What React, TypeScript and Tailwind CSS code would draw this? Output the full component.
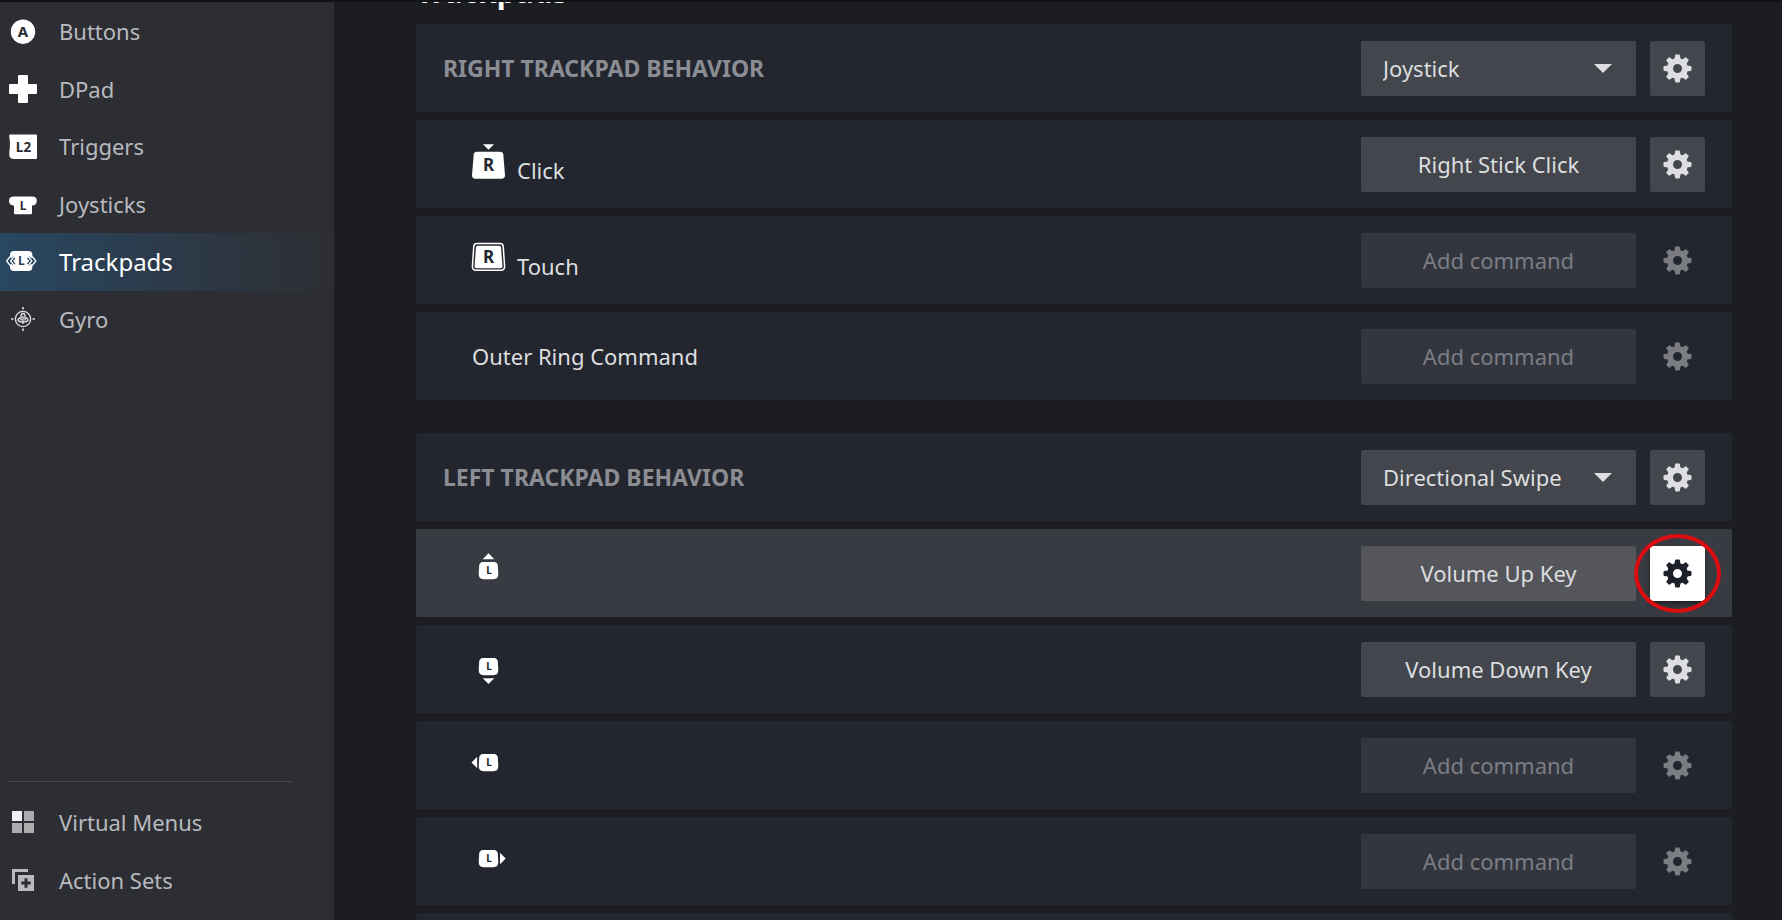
import { useState, type ReactNode } from "react";
import clsx from "clsx";

type Direction = "up" | "down" | "left" | "right";

interface Command {
    id: string;
    label?: string;
    name: string;
    icon?: ReactNode;
    command?: string;
    focused?: boolean;
}

interface BehaviorSectionProps {
    title: string;
    options: string[];
    commands: Command[];
    children?: ReactNode;
}

/* Sidebar icons */

function ButtonsIcon() {
    return (
        <svg viewBox="0 0 30 30" className="size-[30px]" aria-hidden="true">
            <circle cx="15" cy="14.7" r="12.2" fill="#fff" />
            <text x="15" y="20" textAnchor="middle" fontSize="15" fontWeight="700" fill="#2d2e33">
                A
            </text>
        </svg>
    );
}

function DPadIcon() {
    return (
        <svg viewBox="0 0 30 30" className="size-[30px]" aria-hidden="true">
            <rect x="10" y="1" width="10" height="28" rx="1" fill="#fff" />
            <rect x="1" y="10" width="28" height="10" rx="1" fill="#fff" />
        </svg>
    );
}

function TriggersIcon() {
    return (
        <svg viewBox="0 0 30 30" className="size-[30px]" aria-hidden="true">
            <path
                d="M2 2.5H28Q29 2.5 29 3.5V26Q29 27 28 27H6Q1.5 27 1.3 23Q1.2 20 1.8 16Q2.4 10 1.2 4Q1 2.5 2 2.5Z"
                fill="#fff"
            />
            <text x="15.5" y="20" textAnchor="middle" fontSize="13.5" fontWeight="700" fill="#2d2e33">
                L2
            </text>
        </svg>
    );
}

function JoysticksIcon() {
    return (
        <svg viewBox="0 0 30 30" className="size-[30px]" aria-hidden="true">
            <path
                d="M6 7.5H24Q28.8 7.5 28.8 11.5Q28.8 16.5 24 16.5V24.3Q24 25.3 23 25.3H7Q6 25.3 6 24.3V16.5Q1 16.5 1 11.5Q1 7.5 6 7.5Z"
                fill="#fff"
            />
            <text x="15" y="21.3" textAnchor="middle" fontSize="12" fontWeight="700" fill="#2d2e33">
                L
            </text>
        </svg>
    );
}

function TrackpadsIcon() {
    return (
        <svg viewBox="0 0 30 30" className="size-[30px] overflow-visible" aria-hidden="true">
            <rect x="2" y="4" width="22.4" height="20" rx="4" fill="#fff" />
            <g fill="none" stroke="#27435b" strokeWidth="3.2">
                <path d="M2.2 10.2L-1 14L2.2 17.8M6.2 10.2L3 14L6.2 17.8" />
                <path d="M24.2 10.2L27.4 14L24.2 17.8M20.2 10.2L23.4 14L20.2 17.8" />
            </g>
            <g fill="none" stroke="#fff" strokeWidth="1.3">
                <path d="M2.2 9.5L-1.4 14L2.2 18.5M6.2 9.5L2.6 14L6.2 18.5" />
                <path d="M24.2 9.5L27.8 14L24.2 18.5M20.2 9.5L23.8 14L20.2 18.5" />
            </g>
            <text x="13.4" y="18.4" textAnchor="middle" fontSize="12" fontWeight="700" fill="#27435b">
                L
            </text>
        </svg>
    );
}

function GyroIcon() {
    return (
        <svg viewBox="0 0 30 30" className="size-[30px]" aria-hidden="true">
            <g fill="none" stroke="#dcdedf" strokeWidth="1.4">
                <circle cx="15" cy="15" r="7.6" />
                <path d="M15 3V5.5M15 24.5V27M3 15H5.5M24.5 15H27" strokeWidth="1.6" />
                <path d="M13 16.5V12Q13 9.5 15 9.5Q17 9.5 17 12V16.5M15 12V20" />
                <path d="M12.5 13.5Q10 14.5 10 16Q10.5 18 15 18Q19.5 18 20 16Q20 14.5 17.5 13.5" />
            </g>
        </svg>
    );
}

function VirtualMenusIcon() {
    return (
        <svg viewBox="0 0 30 30" className="size-[30px]" aria-hidden="true">
            <rect x="4" y="4" width="10" height="10" fill="#f0f0f1" />
            <rect x="16" y="4" width="10" height="10" fill="#acacae" />
            <rect x="4" y="16" width="10" height="10" fill="#acacae" />
            <rect x="16" y="16" width="10" height="10" fill="#acacae" />
        </svg>
    );
}

function ActionSetsIcon() {
    return (
        <svg viewBox="0 0 30 30" className="size-[30px]" aria-hidden="true">
            <path d="M4 4H20V7H7V19H4Z" fill="#b8babf" />
            <rect x="10" y="10" width="16" height="16" fill="#b8babf" />
            <path d="M18 13.3V22.7M13.3 18H22.7" stroke="#2d2e33" strokeWidth="3" />
        </svg>
    );
}

/* Row icons */

function ClickIcon() {
    return (
        <svg viewBox="0 0 33 36" className="h-9 w-[33px]" aria-hidden="true">
            <path d="M11 1.3H22L16.5 6.7Z" fill="#fff" />
            <path
                d="M5 8.7H28Q31 8.7 31.3 11.5L33 32Q33 35.8 29.5 35.8H3.5Q0 35.8 0 32L1.7 11.5Q2 8.7 5 8.7Z"
                fill="#fff"
            />
            <text x="16.5" y="28" textAnchor="middle" fontSize="17" fontWeight="700" fill="#23262f">
                R
            </text>
        </svg>
    );
}

function TouchIcon() {
    return (
        <svg viewBox="0 0 33 36" className="h-9 w-[33px] overflow-visible" aria-hidden="true">
            <path
                d="M5 4.4H28Q30.8 4.4 31.2 7.2L32.6 27.5Q32.6 31.2 29 31.2H4Q0.4 31.2 0.4 27.5L1.8 7.2Q2.2 4.4 5 4.4Z"
                fill="none"
                stroke="#fff"
                strokeWidth="1.5"
            />
            <path
                d="M5.6 6.7H27.4Q28.9 6.7 29 8.2L30.5 27.5Q30.5 29.2 29 29.2H4Q2.5 29.2 2.5 27.5L4 8.2Q4.1 6.7 5.6 6.7Z"
                fill="#fff"
            />
            <text x="16.5" y="24" textAnchor="middle" fontSize="17" fontWeight="700" fill="#23262f">
                R
            </text>
        </svg>
    );
}

const arrows: Record<Direction, string> = {
    up: "M10.7 7.2L16.5 1.2L22.3 7.2Z",
    down: "M10.7 30.2L16.5 36L22.3 30.2Z",
    left: "M5.2 12.7L-0.5 18.5L5.2 24.3Z",
    right: "M28 12.7L33.7 18.5L28 24.3Z",
};

function SwipeIcon({ direction }: { direction: Direction }) {
    return (
        <svg viewBox="0 0 33 36" className="h-9 w-[33px] overflow-visible" aria-hidden="true">
            <path d={arrows[direction]} fill="#fff" />
            <path
                d="M11 10H22Q25.3 10 25.8 13.5L26.3 22Q26.3 27.2 21.5 27.2H11.5Q6.7 27.2 6.7 22L7.2 13.5Q7.7 10 11 10Z"
                fill="#fff"
            />
            <text x="17" y="22" textAnchor="middle" fontSize="10" fontWeight="700" fill="#23262f">
                L
            </text>
        </svg>
    );
}

function GearIcon() {
    return (
        <svg viewBox="-0.5 -0.5 29 29" className="size-[29px]" aria-hidden="true">
            <circle cx="14" cy="14" r="7.5" fill="none" stroke="currentColor" strokeWidth="6" />
            {[0, 45, 90, 135, 180, 225, 270, 315].map((angle) => (
                <path
                    key={angle}
                    d="M10.9 5L11.6 0.8Q11.7 0 12.4 0H15.6Q16.3 0 16.4 0.8L17.1 5Z"
                    transform={`rotate(${angle} 14 14)`}
                    fill="currentColor"
                />
            ))}
        </svg>
    );
}

const inputs = [
    { label: "Buttons", icon: <ButtonsIcon /> },
    { label: "DPad", icon: <DPadIcon /> },
    { label: "Triggers", icon: <TriggersIcon /> },
    { label: "Joysticks", icon: <JoysticksIcon /> },
    { label: "Trackpads", icon: <TrackpadsIcon /> },
    { label: "Gyro", icon: <GyroIcon /> },
];

const extras = [
    { label: "Virtual Menus", icon: <VirtualMenusIcon /> },
    { label: "Action Sets", icon: <ActionSetsIcon /> },
];

const rightCommands: Command[] = [
    { id: "right-click", name: "Click", label: "Click", icon: <ClickIcon />, command: "Right Stick Click" },
    { id: "right-touch", name: "Touch", label: "Touch", icon: <TouchIcon /> },
    { id: "right-ring", name: "Outer Ring Command", label: "Outer Ring Command" },
];

const leftCommands: Command[] = [
    { id: "left-up", name: "Swipe up", icon: <SwipeIcon direction="up" />, command: "Volume Up Key", focused: true },
    { id: "left-down", name: "Swipe down", icon: <SwipeIcon direction="down" />, command: "Volume Down Key" },
    { id: "left-left", name: "Swipe left", icon: <SwipeIcon direction="left" /> },
    { id: "left-right", name: "Swipe right", icon: <SwipeIcon direction="right" /> },
];

function NavItem({ label, icon, active }: { label: string; icon: ReactNode; active?: boolean }) {
    return (
        <li
            className={clsx(
                active
                    ? "bg-gradient-to-r from-[#284761] to-[#2d2e33] text-[24px] text-white"
                    : "text-[22px] text-[#b8babf]"
            )}
        >
            <a
                href={`#${label}`}
                aria-current={active ? "page" : undefined}
                className="flex h-full items-center gap-[21px] pl-2"
            >
                {icon}
                <span>{label}</span>
            </a>
        </li>
    );
}

function SettingsButton({ name, state = "normal" }: { name: string; state?: "normal" | "dim" | "focused" }) {
    return (
        <div className="relative">
            <button
                aria-label={`${name} settings`}
                className={clsx(
                    "flex size-[55px] items-center justify-center rounded-xs",
                    state === "normal" && "bg-[#43464d] text-[#dcdedf]",
                    state === "dim" && "text-[#7b7d83]",
                    state === "focused" && "bg-white text-[#1e2029] shadow-md shadow-black/40"
                )}
            >
                <GearIcon />
            </button>

            {/* Highlight ring */}
            {state === "focused" && (
                <span className="pointer-events-none absolute -inset-x-4 -inset-y-3 rounded-[50%] border-4 border-[#dc0d10]" />
            )}
        </div>
    );
}

function CommandRow({ name, label, icon, command, focused }: Command) {
    return (
        <li
            className={clsx(
                "flex h-[88px] items-center justify-between rounded-xs pr-[27px] pl-14",
                focused ? "bg-[#383b42]" : "bg-[#23262f]"
            )}
        >
            {/* The blank label keeps the text baseline, so all icons line up */}
            <div className="flex items-baseline gap-3 leading-8 text-[#dcdedf]">
                {icon}
                <span>{label ?? "\u00a0"}</span>
            </div>
            <div className="flex gap-3.5">
                <button
                    className={clsx(
                        "h-[55px] w-[275px] rounded-xs",
                        !command && "bg-[#33363f] text-[#7b7d83]",
                        command && !focused && "bg-[#43464d] text-[#dcdedf]",
                        command && focused && "bg-[#55565b] text-[#dcdedf]"
                    )}
                >
                    {command ?? "Add command"}
                </button>
                <SettingsButton name={name} state={focused ? "focused" : command ? "normal" : "dim"} />
            </div>
        </li>
    );
}

function BehaviorSection({ title, options, commands, children }: BehaviorSectionProps) {
    const [behavior, setBehavior] = useState(options[0]);

    return (
        <section className="flex flex-col gap-2">
            <div className="flex h-[88px] items-center justify-between rounded-xs bg-[#23262f] px-[27px]">
                <h3 className="text-[23px] font-bold text-[#8b8d92] uppercase">{title}</h3>
                <div className="flex gap-3.5">
                    <div className="relative">
                        <select
                            aria-label={title}
                            value={behavior}
                            onChange={(e) => setBehavior(e.target.value)}
                            className="h-[55px] w-[275px] appearance-none rounded-xs bg-[#43464d] pr-12 pl-[22px] text-[#dcdedf]"
                        >
                            {options.map((option) => (
                                <option key={option}>{option}</option>
                            ))}
                        </select>
                        <svg
                            viewBox="0 0 18 9"
                            className="pointer-events-none absolute top-[23px] right-6 h-[9px] w-[18px]"
                            aria-hidden="true"
                        >
                            <path d="M0 0H18L9 9Z" fill="#dcdedf" />
                        </svg>
                    </div>
                    <SettingsButton name={title} />
                </div>
            </div>
            <ul className="flex flex-col gap-2">
                {commands.map((item) => (
                    <CommandRow key={item.id} {...item} />
                ))}
                {children}
            </ul>
        </section>
    );
}

export default function App() {
    return (
        <div className="flex h-screen flex-col overflow-hidden bg-[#1c1d21] font-['Noto_Sans','Open_Sans',sans-serif] text-[22px]">
            <div className="h-0.5 shrink-0 bg-[#121316]" />

            <div className="flex min-h-0 flex-1">
                {/* Sidebar */}
                <nav className="flex w-[334px] shrink-0 flex-col justify-between bg-[#2d2e33] pt-px pb-[11px]">
                    <ul className="grid h-[345px] grid-rows-6">
                        {inputs.map((item) => (
                            <NavItem key={item.label} {...item} active={item.label === "Trackpads"} />
                        ))}
                    </ul>
                    <div>
                        <hr className="mr-[42px] ml-[7px] border-[#44464b]" />
                        <ul className="mt-[11px] grid h-[116px] grid-rows-2">
                            {extras.map((item) => (
                                <NavItem key={item.label} {...item} />
                            ))}
                        </ul>
                    </div>
                </nav>

                {/* Behaviors */}
                <main className="flex-1 overflow-hidden pr-[50px] pl-[82px]">
                    <h2 className="-mt-6 mb-[18px] text-[30px] leading-7 font-bold text-white">Trackpads</h2>
                    <div className="flex flex-col gap-[33px]">
                        <BehaviorSection
                            title="Right Trackpad Behavior"
                            options={["Joystick", "Directional Swipe"]}
                            commands={rightCommands}
                        />
                        <BehaviorSection
                            title="Left Trackpad Behavior"
                            options={["Directional Swipe", "Joystick"]}
                            commands={leftCommands}
                        >
                            <li className="h-[88px] rounded-xs bg-[#23262f]" />
                        </BehaviorSection>
                    </div>
                </main>
            </div>
        </div>
    );
}
